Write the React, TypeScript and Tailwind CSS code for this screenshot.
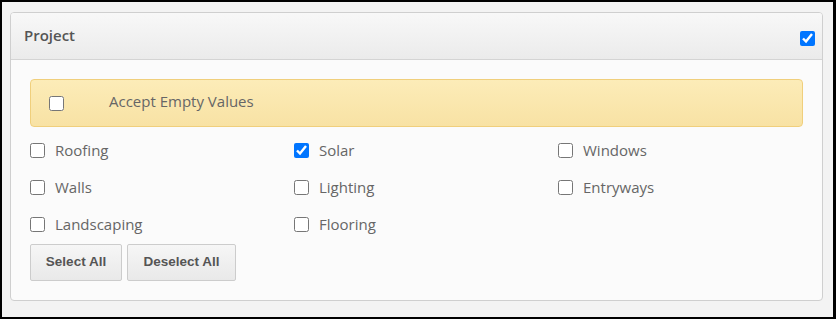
import React from "react";

const items = [
  { label: "Roofing", checked: false },
  { label: "Solar", checked: true },
  { label: "Windows", checked: false },
  { label: "Walls", checked: false },
  { label: "Lighting", checked: false },
  { label: "Entryways", checked: false },
  { label: "Landscaping", checked: false },
  { label: "Flooring", checked: false },
];

function Box({ checked }: { checked: boolean }) {
  return (
    <input
      type="checkbox"
      readOnly
      checked={checked}
      className="m-0 w-[15px] h-[15px] shrink-0 accent-[#0075ff]"
    />
  );
}

export default function App() {
  return (
    <div
      className="w-[836px] h-[319px] bg-[#f3f3f3] border-black border-l-[2px] border-t-[2px] border-r-[3px] border-b-[2px] pl-[8px] pt-[10px] pr-[10px]"
      style={{ fontFamily: '"Open Sans", sans-serif' }}
    >
      <div className="border border-[#cfcfcf] rounded-[4px] bg-[#fbfbfb] overflow-hidden">
        <div className="h-[47px] flex items-center justify-between pl-[13px] pr-[7px] border-b border-[#d4d4d4] bg-gradient-to-b from-[#f8f8f8] to-[#ebebeb]">
          <span className="text-[15px] font-semibold text-[#555555] -mt-[2px]">Project</span>
          <span className="mt-[5px] flex">
            <Box checked={true} />
          </span>
        </div>
        <div className="p-[19px]">
          <div className="h-[48px] flex items-center pl-[18px] border border-[#f0cf7c] rounded-[4px] bg-gradient-to-b from-[#fcecb8] to-[#f8e2a4]">
            <Box checked={false} />
            <span className="ml-[45px] text-[15px] text-[#666666] -mt-[4px]">Accept Empty Values</span>
          </div>
          <div className="mt-[5px] grid grid-cols-[264px_264px_1fr]">
            {items.map((it) => (
              <div key={it.label} className="h-[37px] flex items-center">
                <Box checked={it.checked} />
                <span className="ml-[10px] text-[15px] text-[#666666]">{it.label}</span>
              </div>
            ))}
          </div>
          <div className="mt-[1px] flex gap-[5px]">
            <button
              className="h-[37px] w-[92px] border border-[#cccccc] rounded-[2px] bg-gradient-to-b from-[#f6f6f6] to-[#e9e9e9] text-[13.5px] font-bold text-[#555555]"
              style={{ fontFamily: '"Liberation Sans", Arial, sans-serif' }}
            >
              Select All
            </button>
            <button
              className="h-[37px] w-[109px] border border-[#cccccc] rounded-[2px] bg-gradient-to-b from-[#f6f6f6] to-[#e9e9e9] text-[13.5px] font-bold text-[#555555]"
              style={{ fontFamily: '"Liberation Sans", Arial, sans-serif' }}
            >
              Deselect All
            </button>
          </div>
        </div>
      </div>
    </div>
  );
}
